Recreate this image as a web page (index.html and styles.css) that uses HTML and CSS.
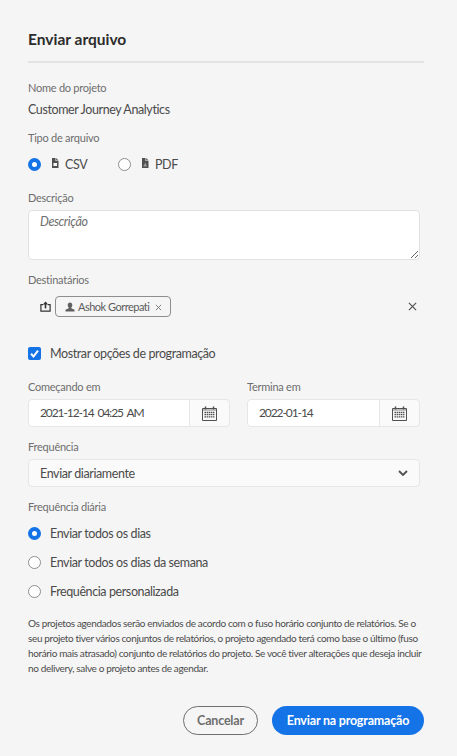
FILE: index.html
```html
<!DOCTYPE html>
<html lang="pt">
<head>
  <meta charset="UTF-8">
  <meta name="viewport" content="width=device-width, initial-scale=1.0">
  <title>Enviar arquivo</title>
  <link rel="stylesheet" href="styles.css">
</head>
<body>
  <div class="dialog">
    <h2 class="title">Enviar arquivo</h2>

    <div class="label label-name">Nome do projeto</div>
    <div class="value">Customer Journey Analytics</div>

    <div class="label label-type">Tipo de arquivo</div>
    <div class="type-row">
      <span class="radio on"></span>
      <svg class="file-icon" viewBox="0 0 8 10"><path d="M1 0h3.5v3H7.500v7H1zM5.200 0l2.300 2.400H5.200z" fill="#505050"/><rect x="2.400" y="5" width="3.600" height="3" fill="#f5f5f5"/></svg>
      <span class="type-text">CSV</span>
      <span class="radio"></span>
      <svg class="file-icon" viewBox="0 0 8 10"><path d="M1 0h3.5v3H7.500v7H1zM5.200 0l2.300 2.400H5.200z" fill="#505050"/><path d="M2.200 8.400 4.400 4.600 6 8.400z" fill="#9a9a9a"/></svg>
      <span class="type-text">PDF</span>
    </div>

    <label class="label label-desc" for="desc">Descrição</label>
    <textarea id="desc" class="desc" placeholder="Descrição"></textarea>

    <div class="label label-dest">Destinatários</div>
    <div class="dest-row">
      <svg class="share-icon" viewBox="0 0 11 11"><path d="M3.200 3.600H.9v6.600h9.200V3.600H7.800" fill="none" stroke="#333" stroke-width="1.200"/><path d="M5.500 7.400V1.600" stroke="#333" stroke-width="1.600"/><path d="M2.900 3.400 5.500.6l2.600 2.800z" fill="#333"/></svg>
      <div class="tag">
        <svg class="user-icon" viewBox="0 0 10 10"><path d="M5 .4c1.400 0 2.300 1 2.300 2.600 0 1.100-.5 2-1 2.500v.8l3.200 1.500v1.600H.5V7.800l3.200-1.500v-.8c-.5-.5-1-1.400-1-2.500C2.700 1.400 3.600.4 5 .4z" fill="#606060"/></svg>
        <span class="tag-text">Ashok Gorrepati</span>
        <svg class="tag-x" viewBox="0 0 8 8"><path d="M1 1l6 6M7 1 1 7" stroke="#707070" stroke-width="1"/></svg>
      </div>
      <svg class="clear-x" viewBox="0 0 10 10"><path d="M1 1l8 8M9 1 1 9" stroke="#505050" stroke-width="1.300"/></svg>
    </div>

    <div class="option check-row">
      <span class="checkbox"><svg viewBox="0 0 13 13"><path d="M3 6.800 5.500 9.500 10 3.700" fill="none" stroke="#fff" stroke-width="2"/></svg></span>
      <span>Mostrar opções de programação</span>
    </div>

    <div class="dates">
      <div class="date-col start">
        <div class="label">Começando em</div>
        <div class="date-field">
          <span class="date-text">2021-12-14 04:25 AM</span>
          <span class="date-btn">
            <svg class="cal-icon" viewBox="0 0 15 15"><path d="M.5 2.500h14v12H.5z" fill="none" stroke="#505050"/><path d="M1 2.500h13v2.500H1z" fill="#505050" opacity=".35"/><path d="M3.500.5v3M11.500.5v3" stroke="#505050" stroke-width="1.500"/><path d="M2.500 6.500h10M2.500 8.700h10M2.500 10.900h10" stroke="#505050" stroke-width="1.300" stroke-dasharray="1.500 .6"/></svg>
          </span>
        </div>
      </div>
      <div class="date-col end">
        <div class="label">Termina em</div>
        <div class="date-field">
          <span class="date-text">2022-01-14</span>
          <span class="date-btn">
            <svg class="cal-icon" viewBox="0 0 15 15"><path d="M.5 2.500h14v12H.5z" fill="none" stroke="#505050"/><path d="M1 2.500h13v2.500H1z" fill="#505050" opacity=".35"/><path d="M3.500.5v3M11.500.5v3" stroke="#505050" stroke-width="1.500"/><path d="M2.500 6.500h10M2.500 8.700h10M2.500 10.900h10" stroke="#505050" stroke-width="1.300" stroke-dasharray="1.500 .6"/></svg>
          </span>
        </div>
      </div>
    </div>

    <div class="label label-freq">Frequência</div>
    <div class="select">
      <span>Enviar diariamente</span>
      <svg class="chevron" viewBox="0 0 10 6"><path d="M1 1l4 4 4-4" fill="none" stroke="#505050" stroke-width="1.800"/></svg>
    </div>

    <div class="label label-daily">Frequência diária</div>
    <div class="option daily first"><span class="radio on"></span><span>Enviar todos os dias</span></div>
    <div class="option daily"><span class="radio"></span><span>Enviar todos os dias da semana</span></div>
    <div class="option daily"><span class="radio"></span><span>Frequência personalizada</span></div>

    <p class="note">Os projetos agendados serão enviados de acordo com o fuso horário conjunto de relatórios. Se o seu projeto tiver vários conjuntos de relatórios, o projeto agendado terá como base o último (fuso horário mais atrasado) conjunto de relatórios do projeto. Se você tiver alterações que deseja incluir no delivery, salve o projeto antes de agendar.</p>

    <div class="actions">
      <button type="button" class="btn cancel">Cancelar</button>
      <button type="button" class="btn send">Enviar na programação</button>
    </div>
  </div>
</body>
</html>
```

FILE: styles.css
```css
* {
  box-sizing: border-box;
}
body {
  margin: 0;
  background-color: #f5f5f5;
  color: #4b4b4b;
  font-family: "Lato", "Open Sans", sans-serif;
  font-size: 12.500px;
  letter-spacing: -0.4px;
}
.dialog {
  width: 457px;
  height: 756px;
  padding: 30px 33px 0 28px;
  overflow: hidden;
}
.title {
  margin: 0;
  height: 33px;
  width: 396px;
  border-bottom: 2px solid #e3e3e3;
  font-size: 15.500px;
  line-height: 19px;
  font-weight: 700;
  letter-spacing: 0;
  color: #2c2c2c;
}
.label {
  display: block;
  height: 16px;
  font-size: 11px;
  line-height: 16px;
  letter-spacing: -0.25px;
  color: #6e6e6e;
}
.label-name {
  margin-top: 17px;
}
.value {
  margin-top: 6px;
  height: 16px;
  line-height: 16px;
}
.label-type {
  margin-top: 12px;
}
.type-row {
  display: flex;
  align-items: center;
  height: 20px;
  margin-top: 8px;
}
.type-text {
  flex: none;
  width: 53px;
  margin-left: 6px;
}
.radio {
  flex: none;
  width: 13px;
  height: 13px;
  border-radius: 50%;
  border: 1.500px solid #8e8e8e;
  background-color: #fff;
}
.radio.on {
  border: 4px solid #1473e6;
}
.file-icon {
  flex: none;
  width: 8px;
  height: 10px;
  margin-left: 10px;
  margin-top: -3px;
}
.label-desc {
  margin-top: 16px;
}
.desc {
  display: block;
  width: 392px;
  height: 50px;
  margin-top: 4px;
  padding: 3px 11px;
  border: 1px solid #e1e1e1;
  border-radius: 4px;
  background-color: #fff;
  font-family: inherit;
  font-size: 12.500px;
  line-height: 16px;
  letter-spacing: -0.4px;
}
.desc::placeholder {
  color: #6e6e6e;
  font-style: italic;
}
.label-dest {
  margin-top: 12px;
}
.dest-row {
  display: flex;
  align-items: center;
  width: 392px;
  height: 21px;
  margin-top: 8px;
  padding-left: 12px;
}
.share-icon {
  flex: none;
  width: 11px;
  height: 11px;
}
.tag {
  display: flex;
  align-items: center;
  flex: none;
  width: 116px;
  height: 21px;
  margin-left: 4px;
  padding-left: 9px;
  border: 1px solid #8e8e8e;
  border-radius: 4px;
  font-size: 11px;
  letter-spacing: -0.5px;
  color: #5c5c5c;
}
.tag-text {
  white-space: nowrap;
}
.user-icon {
  flex: none;
  width: 10px;
  height: 10px;
  margin-right: 3px;
}
.tag-x {
  flex: none;
  width: 7px;
  height: 7px;
  margin-left: 6px;
  margin-top: 2px;
}
.clear-x {
  width: 9px;
  height: 9px;
  margin-left: auto;
  margin-right: 3px;
}
.option {
  display: flex;
  align-items: center;
  gap: 9px;
  height: 20px;
}
.check-row {
  margin-top: 26px;
}
.checkbox {
  flex: none;
  width: 13px;
  height: 13px;
  border-radius: 2px;
  background-color: #1473e6;
}
.checkbox svg {
  display: block;
}
.dates {
  display: flex;
  gap: 17px;
  width: 392px;
  margin-top: 16px;
}
.start {
  width: 202px;
}
.end {
  width: 173px;
}
.date-field {
  display: flex;
  height: 28px;
  margin-top: 4px;
  border: 1px solid #e6e6e6;
  border-radius: 4px;
  background-color: #fafafa;
}
.date-text {
  flex: 1;
  padding-left: 11px;
  background-color: #fff;
  border-right: 1px solid #e6e6e6;
  border-radius: 4px 0 0 4px;
  font-size: 12px;
  line-height: 26px;
  letter-spacing: -1.1px;
  word-spacing: 2px;
}
.date-btn {
  display: flex;
  align-items: center;
  justify-content: center;
  width: 39px;
}
.cal-icon {
  width: 15px;
  height: 15px;
}
.label-freq {
  margin-top: 12px;
}
.select {
  display: flex;
  align-items: center;
  justify-content: space-between;
  width: 392px;
  height: 28px;
  margin-top: 4px;
  padding: 0 11px;
  border: 1px solid #e6e6e6;
  border-radius: 4px;
  background-color: #fafafa;
}
.chevron {
  width: 10px;
  height: 6px;
}
.label-daily {
  margin-top: 12px;
}
.daily {
  margin-top: 9px;
}
.daily.first {
  margin-top: 8px;
}
.note {
  width: 396px;
  margin: 15px 0 0;
  font-size: 10px;
  line-height: 15px;
  letter-spacing: -0.36px;
}
.actions {
  display: flex;
  justify-content: flex-end;
  gap: 14px;
  width: 396px;
  margin-top: 30px;
}
.btn {
  height: 29px;
  border-radius: 15px;
  font-family: inherit;
  font-size: 12.500px;
  font-weight: 700;
  letter-spacing: -0.2px;
}
.cancel {
  width: 75px;
  border: 1px solid #6e6e6e;
  background-color: transparent;
  color: #6e6e6e;
}
.send {
  width: 152px;
  border: none;
  background-color: #1473e6;
  color: #fff;
}
```
